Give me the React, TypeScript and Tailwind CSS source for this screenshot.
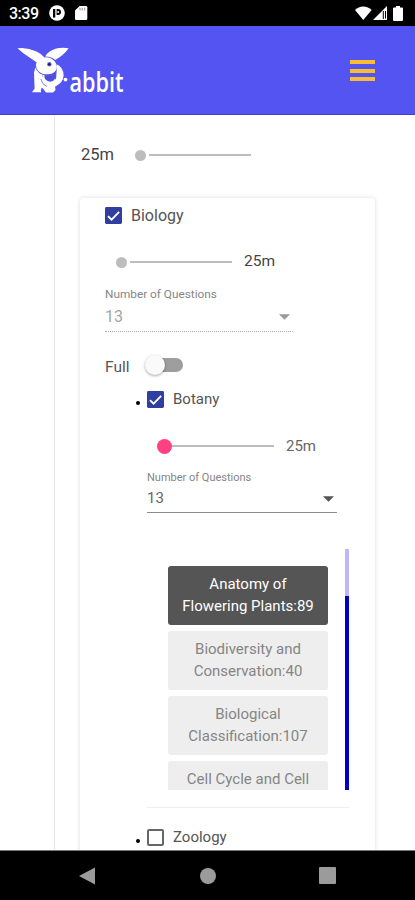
import React from 'react';
import clsx from 'clsx';

interface Chapter {
  name: string[];
  selected?: boolean;
}

const chapters: Chapter[] = [
  { name: ['Anatomy of', 'Flowering Plants:89'], selected: true },
  { name: ['Biodiversity and', 'Conservation:40'] },
  { name: ['Biological', 'Classification:107'] },
  { name: ['Cell Cycle and Cell'] },
];

const StatusBar: React.FC = () => (
  <div className="flex h-[26px] shrink-0 items-center bg-black pl-[9px] pr-3 text-white">
    <span className="mt-px w-[30px] whitespace-nowrap text-[16px] font-medium leading-none tracking-[-0.5px]">3:39</span>
    <svg className="ml-[10px]" width="16" height="16" viewBox="0 0 16 16">
      <circle cx="8" cy="8" r="7.8" fill="#fff" />
      <path d="M4 4h2.300v8.500H4z" fill="#000" />
      <path d="M7.600 4H9a3 3 0 0 1 0 6H7.600z" fill="#000" />
      <circle cx="9.200" cy="7" r="1" fill="#fff" />
    </svg>
    <svg className="ml-[10px]" width="13" height="14" viewBox="0 0 13 14">
      <path d="M4.600 0H11a1.300 1.300 0 0 1 1.300 1.300v11.400A1.300 1.300 0 0 1 11 14H1.300A1.300 1.300 0 0 1 0 12.700V4.600z" fill="#fff" />
      <path d="M5 1.800v2.700M7.300 1.800v2.700M9.600 1.800v2.700" stroke="#aaa" strokeWidth="1.300" />
    </svg>
    <svg className="ml-auto" width="17" height="14" viewBox="0 0 17 14">
      <path d="M8.300 14 0 4Q3.400.400 8.300.400T16.600 4z" fill="#fff" />
    </svg>
    <svg className="ml-[1px]" width="14" height="14" viewBox="0 0 14 14">
      <path d="M14 0v14H0z" fill="#fff" />
      <path d="M10.300 5v8M12.500 5v7.500" stroke="#000" strokeWidth="1" />
    </svg>
    <svg className="ml-[6px]" width="10" height="15" viewBox="0 0 10 15">
      <path d="M3 0h4v1.500h2a1 1 0 0 1 1 1V14a1 1 0 0 1-1 1H1a1 1 0 0 1-1-1V2.500a1 1 0 0 1 1-1h2z" fill="#fff" />
    </svg>
  </div>
);

const Header: React.FC = () => (
  <header className="flex h-[89px] shrink-0 items-center justify-between border-b border-[#4040c8] bg-[#5454f2] pl-[17px] pr-[40px]">
    <svg className="mt-[2px] overflow-visible" width="140" height="64" viewBox="17 39 140 64">
      <g fill="#fff">
        <path d="M17.500 48.200Q27 46.800 36.500 51.500 42 54 44.500 57.500L37.500 63Q34 60.500 29.500 57.500 23 53.500 17.500 48.200z" />
        <path d="M68.600 48.200Q58 46.500 50 51.200 47 53.200 45.200 56.500 52 56.800 55.200 60 64 55 68.600 48.200z" />
        <path d="M36 64Q38 57.500 46 57.300C52 57.400 56.500 61.500 56.800 67.500 56.300 71.500 53 74 48 74.300 41 74.600 35.500 71 36 64z" />
        <path d="M35.200 67.500Q38 73.800 43.500 75 42.500 81.500 49.500 82.600 55.500 83 56.200 77.500 57 70 56.600 64.300 63.300 67 63.600 75.500 63.400 82.500 55 86.800L55.500 90 53 92.600H46L42.500 88 40.700 90 41.300 92.200H32L34.600 88.500 34 73z" />
        <circle cx="65.500" cy="79.600" r="1.900" />
      </g>
      <path d="M42 75.200Q49 77.300 55.800 74.200 55 80.200 49.500 80.600 43.500 80.500 42 75.200z" fill="#5050d5" />
      <path d="M43.500 75Q43 81.500 49.500 82.600 54 82.900 55.600 79.500" stroke="#fff" strokeWidth="1.800" fill="none" />
      <path d="M40.800 79Q42 84.500 47 86.600M41.600 88V92" stroke="#5454f2" strokeWidth="0.700" fill="none" />
      <circle cx="49.300" cy="64.200" r="2.200" fill="#6868d8" />
      <circle cx="49.300" cy="64.200" r="1.300" fill="#1b1b60" />
      <text x="69.500" y="91.500" textLength="54" lengthAdjust="spacingAndGlyphs" fill="#fff" fontFamily="Open Sans, sans-serif" fontSize="26.500" fontWeight="600">
        abbit
      </text>
    </svg>
    <div className="mt-px flex w-[25px] flex-col gap-[4.600px]">
      <span className="h-1 bg-[#f8bd32]" />
      <span className="h-1 bg-[#f8bd32]" />
      <span className="h-1 bg-[#f8bd32]" />
    </div>
  </header>
);

const Slider: React.FC<{ active?: boolean }> = ({ active }) => (
  <div className="flex h-4 items-center">
    <span
      className={clsx(
        'rounded-full',
        active ? 'size-[15px] bg-[#ff4081]' : 'mr-[3px] size-[11px] bg-[#bdbdbd]',
      )}
    />
    <span className="h-[2px] w-[102px] bg-[#bdbdbd]" />
  </div>
);

interface CheckboxProps {
  checked?: boolean;
  label: string;
  small?: boolean;
}

const Checkbox: React.FC<CheckboxProps> = ({ checked, label, small }) => (
  <div className="flex h-[17px] items-center gap-[9px]">
    {checked ? (
      <svg width="17" height="17" viewBox="0 0 24 24">
        <rect width="24" height="24" rx="2" fill="#303f9f" />
        <path d="M4.200 12.800 9.300 17.900 20 7" fill="none" stroke="#fff" strokeWidth="2.600" />
      </svg>
    ) : (
      <span className="size-[17px] rounded-[2px] border-2 border-[#666]" />
    )}
    <span className={clsx('leading-none text-[#555]', small ? 'text-[15px]' : 'text-[16px]')}>{label}</span>
  </div>
);

const QuestionSelect: React.FC<{ disabled?: boolean }> = ({ disabled }) => (
  <div className={disabled ? 'w-[188px]' : 'w-[190px]'}>
    <div
      className={clsx(
        'h-[14px] whitespace-nowrap leading-[14px] text-[#858585]',
        disabled ? 'text-[11.800px]' : 'text-[11px]',
      )}
    >
      Number of Questions
    </div>
    <div
      className={clsx(
        'flex items-center justify-between border-b pr-[3px]',
        disabled
          ? 'h-[31px] border-dotted border-[#aaa] pt-[2px] text-[16px] text-[#a5a5a5]'
          : 'h-[28px] border-[#8b8b8b] text-[15px] text-[#666]',
      )}
    >
      <span>13</span>
      <svg width="11" height="6" viewBox="0 0 11 6">
        <path d="M0 .3h11L5.500 5.700z" fill={disabled ? '#999' : '#555'} />
      </svg>
    </div>
  </div>
);

const ChapterList: React.FC = () => (
  <div className="ml-[21px] mt-9 flex h-[241px] w-[181px] justify-between">
    <div className="flex h-[241px] w-[160px] flex-col gap-[6px] overflow-hidden pt-[17px]">
      {chapters.map((chapter) => (
        <div
          key={chapter.name[0]}
          className={clsx(
            'flex h-[59px] shrink-0 flex-col rounded-[3px] pt-[7px] text-center text-[15px] leading-[22px]',
            chapter.selected ? 'bg-[#555] text-white' : 'bg-[#eee] text-[#858585]',
          )}
        >
          {chapter.name.map((line) => (
            <span key={line}>{line}</span>
          ))}
        </div>
      ))}
    </div>
    <div className="w-1 bg-[#bdb8f5] pt-[47px]">
      <div className="h-full bg-[#0000c4]" />
    </div>
  </div>
);

const NavBar: React.FC = () => (
  <div className="flex h-[50px] shrink-0 items-center justify-between border-t border-[#777] bg-black pl-[79px] pr-[79px]">
    <svg width="17" height="18" viewBox="0 0 17 18">
      <path d="M0 9 16 .5v17z" fill="#9b9b9b" />
    </svg>
    <span className="ml-px size-4 rounded-full bg-[#9b9b9b]" />
    <span className="size-[17px] rounded-[1px] bg-[#9b9b9b]" />
  </div>
);

const App: React.FC = () => (
  <div className="flex h-[900px] w-[415px] flex-col overflow-hidden bg-white font-['Roboto',sans-serif]">
    <StatusBar />
    <Header />
    <main className="ml-[54px] flex min-h-0 flex-1 flex-col overflow-hidden border-l border-[#e8e8e8] pl-[25px]">
      <div className="mt-8 flex h-4 items-center gap-[21px] pl-px">
        <span className="text-[16.500px] leading-none text-[#444]">25m</span>
        <Slider />
      </div>
      <section className="mt-[35px] h-[670px] w-[295px] shrink-0 rounded-[4px] bg-white pl-[25px] pt-[9px] shadow-[0_0_4px_rgba(0,0,0,0.15)]">
        <Checkbox checked label="Biology" />
        <div className="mt-[30px] flex h-4 items-center gap-[12px] pl-[11px]">
          <Slider />
          <span className="text-[15.500px] leading-none text-[#444]">25m</span>
        </div>
        <div className="mt-[17px]">
          <QuestionSelect disabled />
        </div>
        <div className="mt-[22px] flex h-[22px] items-center gap-[17px]">
          <span className="mt-[5px] text-[15.500px] leading-none text-[#555]">Full</span>
          <span className="relative h-[14px] w-[37px] rounded-full bg-[#9e9e9e]">
            <span className="absolute -left-px -top-[3px] size-5 rounded-full bg-[#fafafa] shadow-[0_1px_3px_rgba(0,0,0,0.35)]" />
          </span>
        </div>
        <ul>
          <li className="mt-[15px] flex">
            <span className="ml-[31px] mr-[7px] mt-[10px] size-1 rounded-full bg-black" />
            <div>
              <Checkbox small checked label="Botany" />
              <div className="mt-[30px] flex h-4 items-center gap-[12px] pl-[10px]">
                <Slider active />
                <span className="text-[15px] leading-none text-[#666]">25m</span>
              </div>
              <div className="mt-[17px]">
                <QuestionSelect />
              </div>
              <ChapterList />
              <div className="mt-[17px] h-px w-[202px] bg-[#eee]" />
            </div>
          </li>
          <li className="mt-[21px] flex">
            <span className="ml-[31px] mr-[7px] mt-[10px] size-1 rounded-full bg-black" />
            <Checkbox small label="Zoology" />
          </li>
        </ul>
      </section>
    </main>
    <NavBar />
  </div>
);

export default App;
